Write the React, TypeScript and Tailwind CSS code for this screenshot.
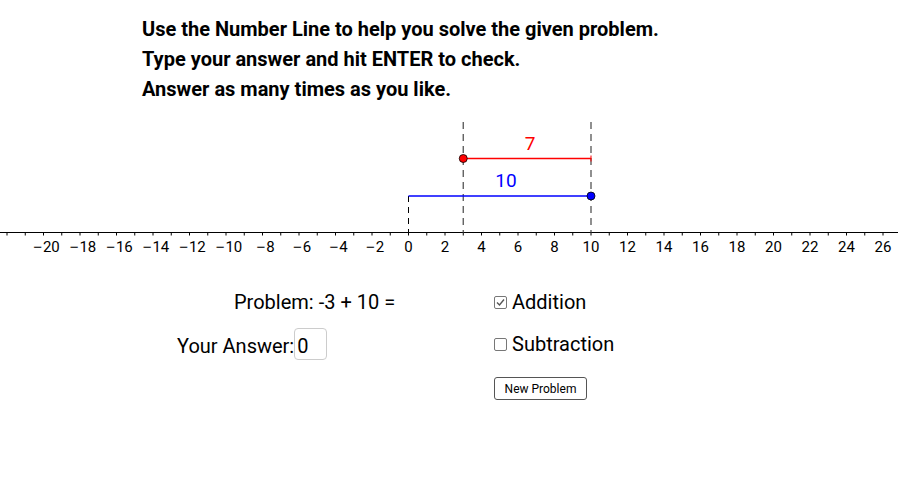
import React from "react";

const X0 = 408.5;
const UNIT = 18.25;
const AXIS_Y = 122.5;

const px = (u: number) => X0 + UNIT * u;

const NumberLine = () => {
  const ticks: number[] = [];
  for (let u = -22; u <= 27; u++) ticks.push(u);
  const labels: number[] = [];
  for (let u = -20; u <= 26; u += 2) labels.push(u);

  return (
    <svg width="900" height="150" viewBox="0 0 900 150" className="block">
      {/* axis */}
      <line x1="0" y1={AXIS_Y} x2="898" y2={AXIS_Y} stroke="#000" strokeWidth="1" />
      {ticks.map((u) => (
        <line key={u} x1={px(u)} y1={AXIS_Y} x2={px(u)} y2={AXIS_Y + 3} stroke="#000" strokeWidth="1" />
      ))}
      {labels.map((u) => (
        <text
          key={u}
          x={u < 0 ? px(u) + 3 : px(u)}
          y="141.5"
          textAnchor="middle"
          fontSize="15"
          fontFamily="Roboto, 'Liberation Sans', sans-serif"
          fill="#000"
        >
          {u < 0 ? (
            <>
              <tspan fontFamily="'Liberation Sans', sans-serif">{"\u2212"}</tspan>
              <tspan dx="1">{Math.abs(u)}</tspan>
            </>
          ) : (
            u
          )}
        </text>
      ))}

      {/* guide lines */}
      <line x1={px(0)} y1="86" x2={px(0)} y2={AXIS_Y} stroke="#000" strokeWidth="1" strokeDasharray="6 5" />
      <line x1={px(3)} y1="12" x2={px(3)} y2={AXIS_Y} stroke="#555" strokeWidth="1.3" strokeDasharray="7 5" />
      <line x1={px(10)} y1="12" x2={px(10)} y2={AXIS_Y} stroke="#555" strokeWidth="1.3" strokeDasharray="7 5" />

      {/* red segment: 7 */}
      <line x1={px(3)} y1="48.5" x2={px(10)} y2="48.5" stroke="#ff0000" strokeWidth="1.3" />
      <line x1={px(10)} y1="45.5" x2={px(10)} y2="51.5" stroke="#ff0000" strokeWidth="1" />
      <circle cx={px(3)} cy="48.5" r="4" fill="#ff0000" stroke="#000" strokeWidth="0.8" />
      <text x="530" y="40" textAnchor="middle" fontSize="19" fontFamily="Roboto, 'Liberation Sans', sans-serif" fill="#ff0000">
        7
      </text>

      {/* blue segment: 10 */}
      <line x1={px(0)} y1="86" x2={px(10)} y2="86" stroke="#0000ff" strokeWidth="1.3" />
      <circle cx={px(10)} cy="86" r="4" fill="#0000ff" stroke="#000" strokeWidth="0.8" />
      <text x="506" y="77" textAnchor="middle" fontSize="19" fontFamily="Roboto, 'Liberation Sans', sans-serif" fill="#0000ff">
        10
      </text>
    </svg>
  );
};

const CheckBox = (props: { checked: boolean; label: string }) => {
  return (
    <div className="flex items-center h-[30px]">
      <div className="w-[13px] h-[13px] border border-[#777] rounded-[2px] flex items-center justify-center mr-[5px]">
        {props.checked ? (
          <svg width="11" height="11" viewBox="0 0 11 11">
            <path d="M2 5.5 L4.5 8 L9 2.5" fill="none" stroke="#555" strokeWidth="1.4" />
          </svg>
        ) : null}
      </div>
      <span>{props.label}</span>
    </div>
  );
};

export default function App() {
  return (
    <div
      className="w-[900px] h-[490px] bg-white text-black overflow-hidden"
      style={{ fontFamily: "Roboto, 'Liberation Sans', sans-serif" }}
    >
      <div className="pt-[14px] pl-[142px] text-[20px] leading-[30px] font-bold">
        <div>Use the Number Line to help you solve the given problem.</div>
        <div>Type your answer and hit ENTER to check.</div>
        <div>Answer as many times as you like.</div>
      </div>

      <div className="mt-[6px]">
        <NumberLine />
      </div>

      <div className="flex text-[20px] leading-[30px]">
        <div className="w-[494px]">
          <div className="mt-[27px] pl-[234px]">Problem: -3 + 10 =</div>
          <div className="mt-[8px] pl-[177px] flex items-start">
            <span className="pt-[6px]">Your Answer:</span>
            <div className="mt-[3px] w-[33px] h-[32px] border border-[#ccc] rounded-[4px] flex items-center pl-[2px] pt-[4px] leading-none">
              0
            </div>
          </div>
        </div>
        <div className="flex flex-col">
          <div className="mt-[27px]">
            <CheckBox checked={true} label="Addition" />
          </div>
          <div className="mt-[12px]">
            <CheckBox checked={false} label="Subtraction" />
          </div>
          <button className="mt-[18px] w-[93px] h-[23px] border border-[#555] rounded-[3px] bg-white text-[12px] leading-none flex items-center justify-center">
            New Problem
          </button>
        </div>
      </div>
    </div>
  );
}
